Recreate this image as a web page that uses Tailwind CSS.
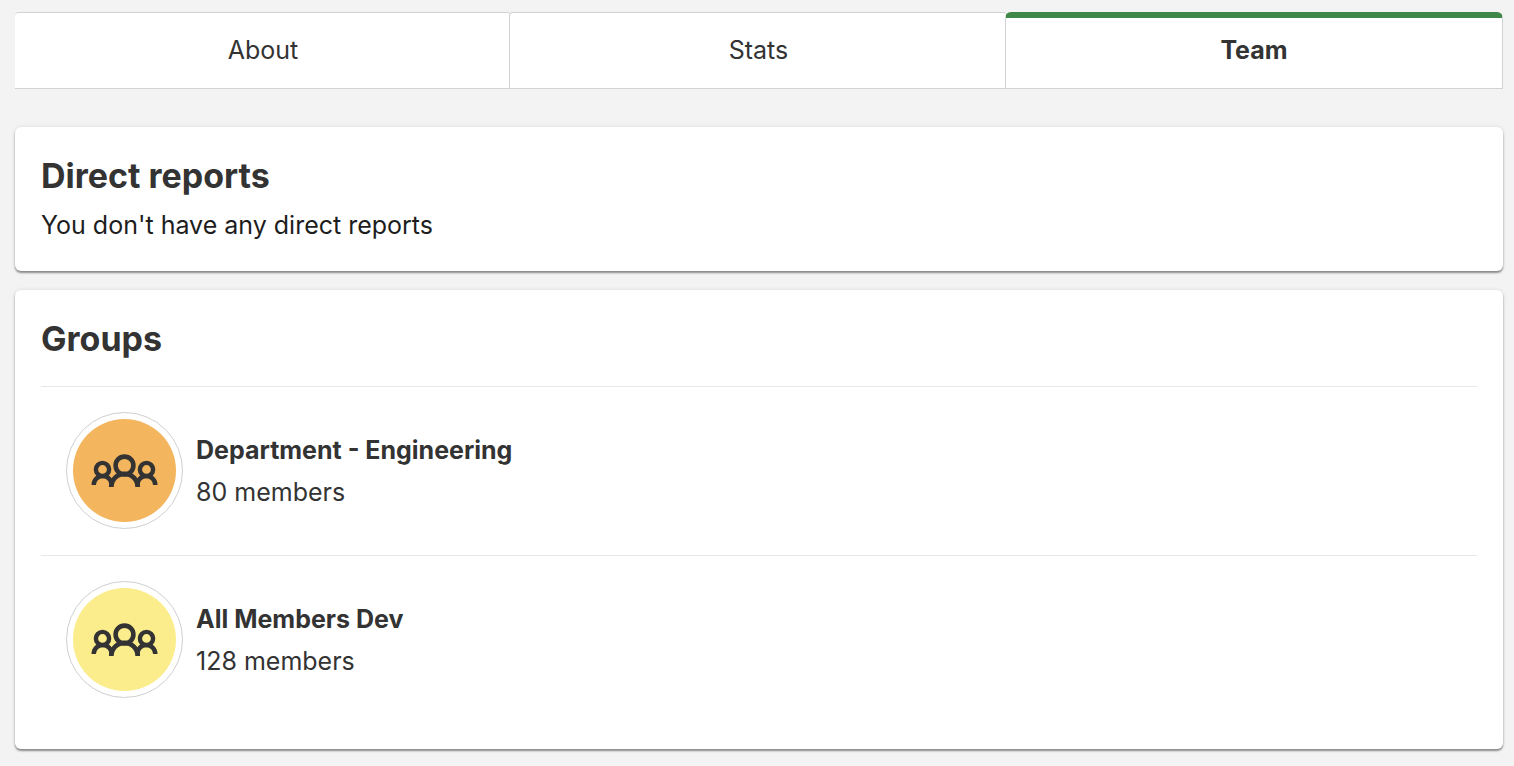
<!DOCTYPE html>
<html lang="en">

<head>
    <meta charset="UTF-8">
    <meta name="viewport" content="width=device-width, initial-scale=1.0">
    <title>Team</title>
    <script src="https://cdn.jsdelivr.net/npm/@tailwindcss/browser@4"></script>
</head>

<body class="bg-[#f3f3f3] min-h-screen pt-3 pb-4 pl-[15px] pr-[11px] font-['Inter','Liberation_Sans',sans-serif] text-[25px] text-[#333]">
    <!-- group icon, shared by the list items -->
    <svg class="hidden">
        <symbol id="people" viewBox="0 0 103 103">
            <g fill="none" stroke="#333" stroke-width="4.4">
                <circle cx="51.5" cy="46.5" r="8.9" stroke-width="4.6" />
                <path d="M38.3 68a13.2 13.2 0 0 1 26.4 0" stroke-width="4.8" />
                <circle cx="29.5" cy="50.5" r="6.6" />
                <path d="M20.7 66a9 9 0 0 1 18 0" />
                <circle cx="73.5" cy="50.5" r="6.6" />
                <path d="M64.3 66a9 9 0 0 1 18 0" />
            </g>
        </symbol>
    </svg>

    <nav role="tablist" class="grid grid-cols-3 mb-[38px]">
        <button type="button" role="tab" aria-selected="false" class="h-[77px] bg-white border-t border-b border-[#d2d2d2] rounded-t">About</button>
        <button type="button" role="tab" aria-selected="false" class="h-[77px] -ml-[2px] bg-white border-t border-l border-b border-[#d2d2d2] rounded-t">Stats</button>
        <button type="button" role="tab" aria-selected="true" class="h-[77px] -ml-[2px] pb-1 bg-white border border-[#d2d2d2] border-t-6 border-t-[#3f8749] rounded-t-md font-bold">Team</button>
    </nav>

    <main class="flex flex-col gap-[19px]">
        <section class="bg-white rounded-md p-[26px] shadow-[0_2px_2px_rgba(0,0,0,0.4),0_0_4px_rgba(0,0,0,0.1)]">
            <h2 class="text-[34px] leading-[46px] font-bold">Direct reports</h2>
            <p class="mt-[6px] leading-[40px] text-[#1d1d1d]">You don't have any direct reports</p>
        </section>

        <section class="bg-white rounded-md p-[26px] pb-[25px] shadow-[0_2px_2px_rgba(0,0,0,0.4),0_0_4px_rgba(0,0,0,0.1)]">
            <h2 class="mb-6 text-[34px] leading-[46px] font-bold">Groups</h2>
            <ul>
                <li class="flex items-center gap-[13px] border-t border-[#e8e8e8] pt-[25px] pb-[26px] pl-[25px]">
                    <div class="size-[117px] shrink-0 rounded-full border border-[#d0d0d0] p-[6px]">
                        <svg class="size-full rounded-full bg-[#f3b65e]"><use href="#people" /></svg>
                    </div>
                    <div class="leading-[42px]">
                        <h3 class="font-bold">Department - Engineering</h3>
                        <p>80 members</p>
                    </div>
                </li>
                <li class="flex items-center gap-[13px] border-t border-[#e8e8e8] pt-[25px] pb-[26px] pl-[25px]">
                    <div class="size-[117px] shrink-0 rounded-full border border-[#d0d0d0] p-[6px]">
                        <svg class="size-full rounded-full bg-[#fced8c]"><use href="#people" /></svg>
                    </div>
                    <div class="leading-[42px]">
                        <h3 class="font-bold">All Members Dev</h3>
                        <p>128 members</p>
                    </div>
                </li>
            </ul>
        </section>
    </main>
</body>

</html>
